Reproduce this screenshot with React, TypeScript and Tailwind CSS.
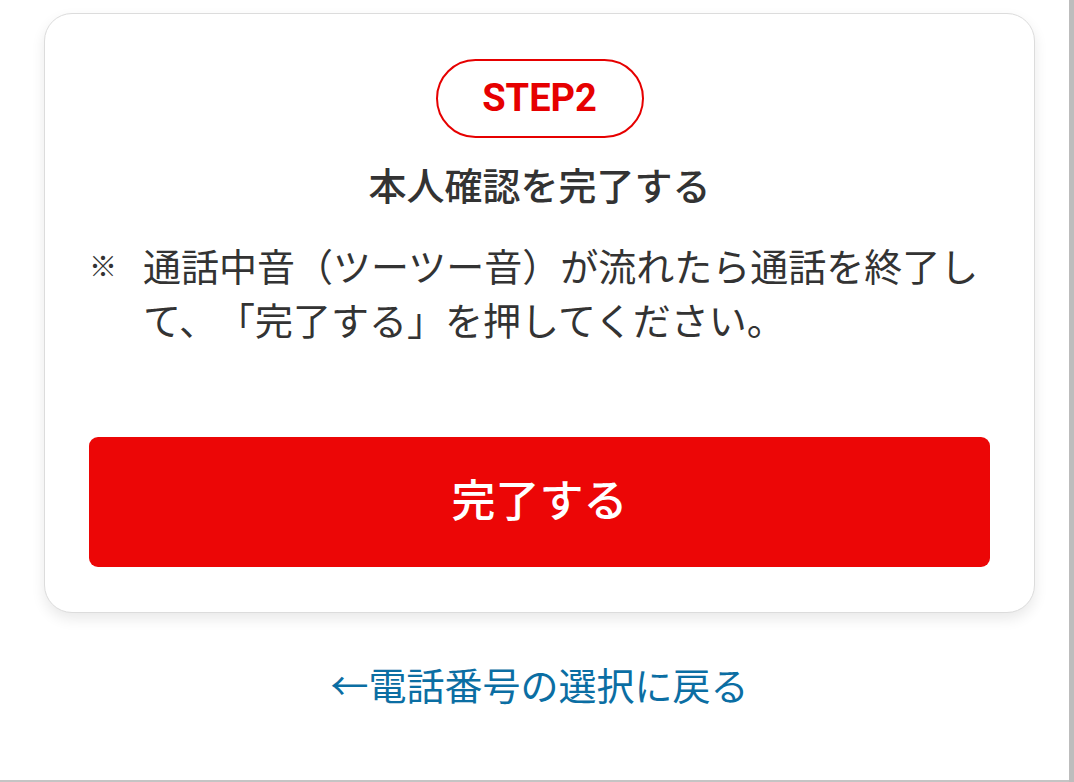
export default function App() {
  const jp = { fontFamily: '"Noto Sans CJK JP", "Noto Sans", sans-serif' };

  return (
    <div className="flex h-[782px] w-[1074px] overflow-hidden bg-white [text-spacing-trim:space-all]" style={jp}>
      <main className="flex h-full w-[1069px] flex-col border-b-2 border-[#c4c4c4] pl-[44px] pt-[13px]">
        <section className="flex w-[991px] flex-col items-center rounded-[28px] border border-[#dcdcdc] bg-white px-[44px] pb-[45px] pt-[45px] shadow-[0_6px_14px_rgba(0,0,0,0.09)]">
          <div
            className="flex h-[79px] w-[208px] items-center justify-center rounded-full border-2 border-[#e60000] text-[38px] font-bold text-[#e60000]"
            style={{ fontFamily: 'Roboto, "Liberation Sans", sans-serif' }}
          >
            STEP2
          </div>
          <h2 className="mt-[19px] text-[38px] font-medium leading-[53px] text-[#333]">本人確認を完了する</h2>
          <div className="mt-[28px] flex w-full text-[38px] leading-[54px] text-[#333]">
            <span className="w-[54px] shrink-0 text-[28px] font-bold">※</span>
            <p>通話中音（ツーツー音）が流れたら通話を終了して、「完了する」を押してください。</p>
          </div>
          <button className="mt-[91px] flex h-[130px] w-full items-center justify-center rounded-[9px] bg-[#ec0606] pb-[8px] text-[44px] font-medium text-white">
            完了する
          </button>
        </section>
        <a href="#" className="mt-[44px] w-[991px] text-center text-[38px] leading-[53px] text-[#0b6ea3]">
          ←電話番号の選択に戻る
        </a>
      </main>
      <div className="h-full w-[5px] bg-[#bdbdbd]" />
    </div>
  );
}
